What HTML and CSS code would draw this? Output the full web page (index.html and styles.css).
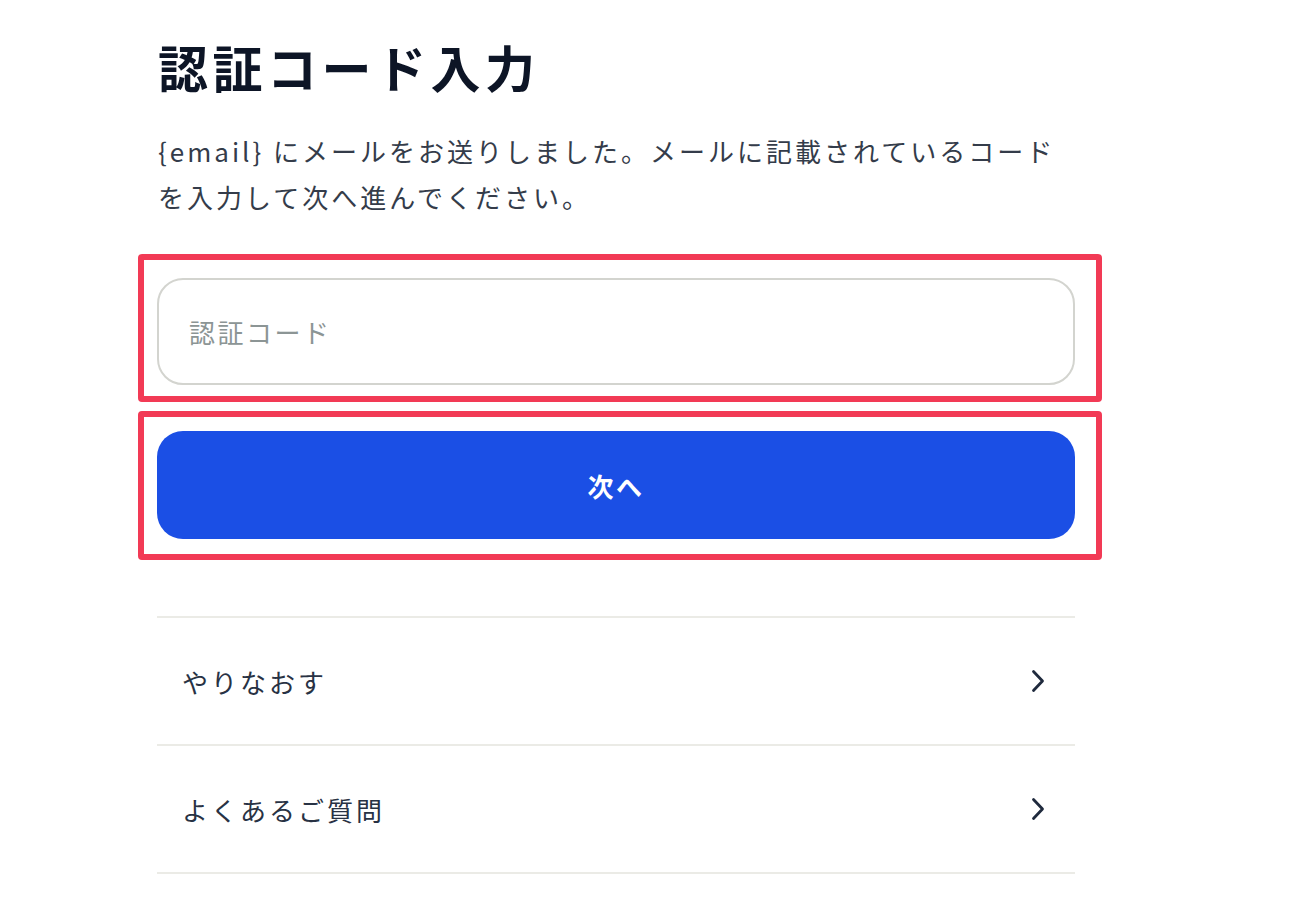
FILE: index.html
```html
<!DOCTYPE html>
<html lang="ja">
<head>
<meta charset="utf-8">
<title>認証コード入力</title>
<link rel="stylesheet" href="styles.css">
</head>
<body>
<main class="page">
  <h1 class="title">認証コード入力</h1>
  <p class="lead">{email} にメールをお送りしました。メールに記載されているコードを入力して次へ進んでください。</p>
  <div class="field field-input">
    <input class="code-input" type="text" placeholder="認証コード">
  </div>
  <div class="field field-button">
    <button class="next-btn" type="button">次へ</button>
  </div>
  <ul class="links">
    <li class="link-row">
      <span class="link-label">やりなおす</span>
      <svg class="chev" viewBox="0 0 14 24" width="14" height="24" aria-hidden="true"><path d="M2.5 2.5 L11.5 12 L2.5 21.5" fill="none" stroke="#1f2a3d" stroke-width="2.8" stroke-linecap="round" stroke-linejoin="round"/></svg>
    </li>
    <li class="link-row">
      <span class="link-label">よくあるご質問</span>
      <svg class="chev" viewBox="0 0 14 24" width="14" height="24" aria-hidden="true"><path d="M2.5 2.5 L11.5 12 L2.5 21.5" fill="none" stroke="#1f2a3d" stroke-width="2.8" stroke-linecap="round" stroke-linejoin="round"/></svg>
    </li>
  </ul>
</main>
</body>
</html>
```

FILE: styles.css
```css
* { box-sizing: border-box; }
html, body {
  margin: 0;
  padding: 0;
  background: #ffffff;
}
body {
  font-family: "Noto Sans CJK JP", "Noto Sans", sans-serif;
  color: #1f2a3d;
}
.page {
  width: 918px;
  margin-left: 157px;
  padding-top: 32px;
}
.title {
  margin: 0 0 0 1px;
  font-size: 50px;
  line-height: 68px;
  font-weight: 700;
  letter-spacing: 4.5px;
  color: #0d1526;
}
.lead {
  width: 900px;
  margin: 28px 0 0 1px;
  font-size: 26px;
  line-height: 46px;
  letter-spacing: 3px;
  color: #343c4a;
}
.field {
  position: relative;
}
.field::after {
  content: "";
  position: absolute;
  border: 6px solid #f23a55;
  border-radius: 4px;
  pointer-events: none;
}
.field-input {
  margin-top: 58px;
}
.field-input::after {
  top: -24px;
  left: -19px;
  right: -27px;
  bottom: -17px;
}
.field-button {
  margin-top: 46px;
}
.field-button::after {
  top: -20px;
  left: -19px;
  right: -27px;
  bottom: -21px;
}
.code-input {
  display: block;
  width: 100%;
  height: 107px;
  border: 2px solid #d3d4cf;
  border-radius: 26px;
  padding: 0 30px;
  font-family: inherit;
  font-size: 26px;
  letter-spacing: 2.5px;
  color: #1f2a3d;
  background: #ffffff;
  outline: none;
}
.code-input::placeholder {
  color: #8c9595;
}
.next-btn {
  display: block;
  width: 100%;
  height: 108px;
  border: none;
  border-radius: 26px;
  background: #1b4fe5;
  color: #ffffff;
  font-family: inherit;
  font-size: 26px;
  font-weight: 700;
  letter-spacing: 2.5px;
  cursor: pointer;
}
.links {
  list-style: none;
  margin: 77px 0 0 0;
  padding: 0;
  border-top: 2px solid #ebebe6;
}
.link-row {
  display: flex;
  align-items: center;
  justify-content: space-between;
  height: 128px;
  padding: 0 30px 0 25px;
  border-bottom: 2px solid #ebebe6;
}
.link-label {
  font-size: 26px;
  letter-spacing: 3px;
  color: #283244;
}
.chev {
  display: block;
}
```
